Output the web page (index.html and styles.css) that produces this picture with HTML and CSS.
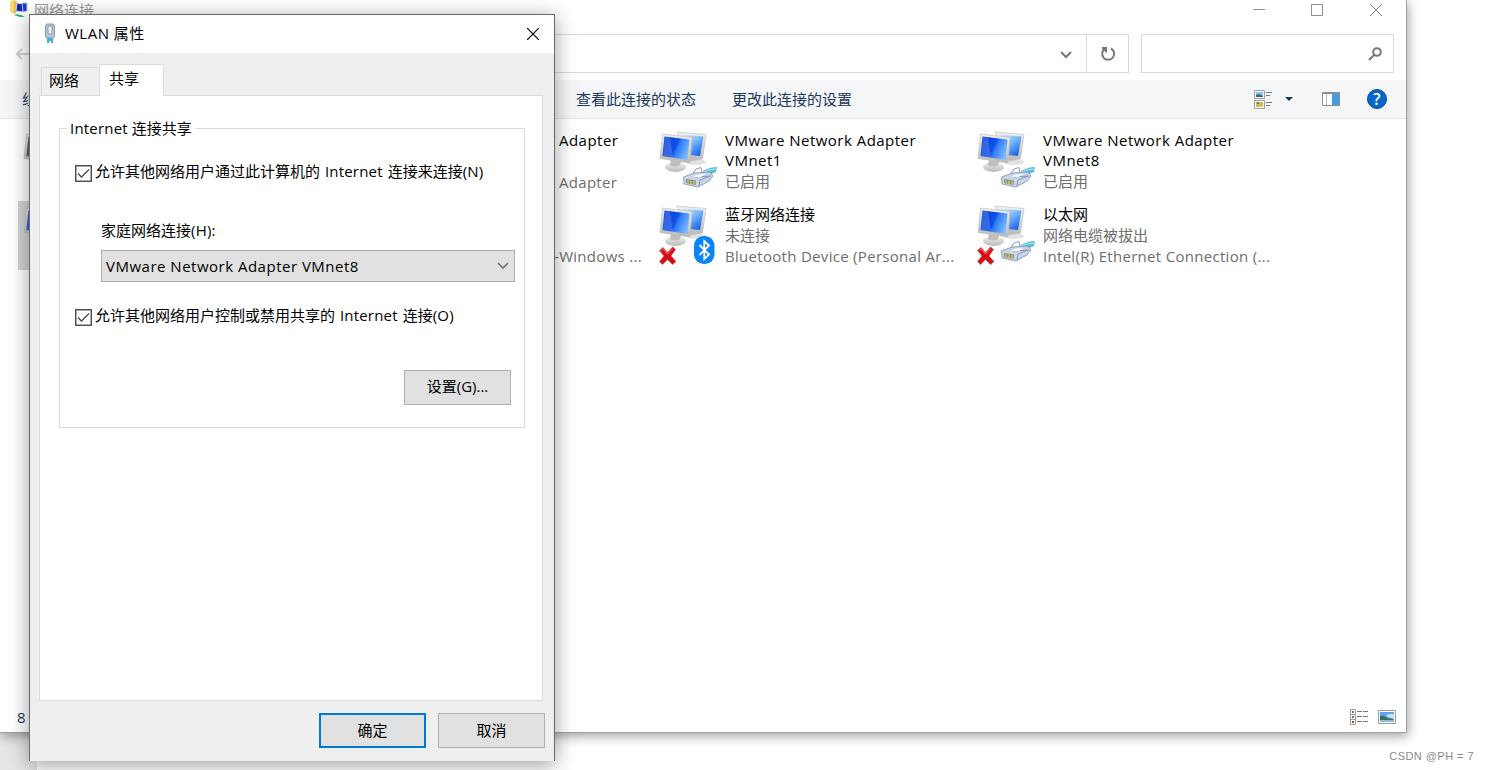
FILE: index.html
```html
<!DOCTYPE html>
<html lang="zh-CN">
<head>
  <meta charset="UTF-8" />
  <title>网络连接</title>
  <link rel="stylesheet" href="styles.css">
</head>
<body>
  <svg width="0" height="0" class="defs">
    <defs>
      <linearGradient id="screen" x1="0" y1="0.2" x2="1" y2="0.6">
        <stop offset="0" stop-color="#0b43d6" />
        <stop offset="0.5" stop-color="#0f50e6" />
        <stop offset="0.6" stop-color="#2f7cf8" />
        <stop offset="1" stop-color="#7dbcff" />
      </linearGradient>
      <linearGradient id="screen2" x1="0" y1="0" x2="0.8" y2="1">
        <stop offset="0" stop-color="#e2f2ff" />
        <stop offset="0.5" stop-color="#79b8fc" />
        <stop offset="1" stop-color="#1660e6" />
      </linearGradient>
      <linearGradient id="metal" x1="0" y1="0" x2="0" y2="1">
        <stop offset="0" stop-color="#f2f2f0" />
        <stop offset="1" stop-color="#b9b9b7" />
      </linearGradient>
    </defs>
    <symbol id="pc" viewBox="0 0 60 60">
      <ellipse cx="37" cy="31" rx="10" ry="3" fill="#e2e2e2" />
      <path d="M18 1L47 3.5L43.5 28L32 30Z" fill="url(#metal)" stroke="#c2c2bf" stroke-width=".7" />
      <path d="M21 3.5L44.5 5.500L41 25L31 24Z" fill="url(#screen2)" />
      <ellipse cx="16.500" cy="36" rx="10.500" ry="5" fill="url(#metal)" />
      <path d="M12 29L22 30L21 34Q16 37 11 34Z" fill="#bdbdbb" />
      <path d="M3.500 3L33 6.500L31 32L1 27.500Z" fill="url(#metal)" stroke="#bdbdba" stroke-width=".7" />
      <path d="M5.500 5.500L30.500 8.500L28.500 29L3.500 25Z" fill="url(#screen)" />
      <path d="M6 6L11 6.500L14 26.500L4 25Z" fill="#fff" opacity=".16" />
    </symbol>
    <symbol id="plug" viewBox="0 0 60 60">
      <path d="M44 40Q51 36 58 36L57 41Q51 43 46 47Z" fill="#5fbcd9" />
      <path d="M45 41Q50 38 57 38" fill="none" stroke="#b5ecf8" />
      <path d="M24.500 46L35 42L51 41L54 45L50 50L39 56L25 53Z" fill="#c9d5e8" stroke="#7f91ae" stroke-width=".8" />
      <path d="M34 43L37 38L42 36.500L43 42M36 46L52 45M40 55L41 49L51 45" fill="none" stroke="#7688a6" stroke-width=".8" />
      <path d="M27 48L37 49.500L36.500 54L27 52Z" fill="#8b916c" />
      <path d="M29 49V52M32 49.500V53M35 50V53.500" stroke="#e3dc79" />
      <path d="M38 43.500L47 42.500L42 46L34 46Z" fill="#f2f7fd" />
    </symbol>
    <symbol id="cross" viewBox="0 0 60 60">
      <path d="M0.500 45.500L4 42.500L8.500 47.500L13.500 42L16.500 44.500L12 51L17 56.500L13.500 59.500L8.500 54.500L3.500 59.500L0.500 56.500L5 51Z" fill="#d90b12" stroke="#c65b5b" stroke-width=".7" />
      <path d="M2.500 45.500L4.500 44L8.500 49L13.500 44" fill="none" stroke="#f46c6c" />
    </symbol>
    <symbol id="bt" viewBox="0 0 60 60">
      <rect x="35" y="31" width="20.500" height="28" rx="9.800" fill="#0a84fb" />
      <path d="M40.500 40L50 49.500L45.300 54V36L50 40.500L40.500 50" fill="none" stroke="#fff" stroke-width="1.800" />
    </symbol>
  </svg>

  <div class="taskbar"></div>

  <div class="explorer">
    <div class="titlebar">
      <svg class="app-icon" width="20" height="20" viewBox="0 0 20 20">
        <path d="M1 1L5 0V14L1 12Z" fill="#f6d879" /><path d="M5 0L8 2V12L5 14Z" fill="#e7bd4a" />
        <path d="M8 3L14 4V12L7 11Z" fill="#1525bd" stroke="#d4d4d4" />
        <path d="M13 3L18 3V11L14 12Z" fill="#173bd0" stroke="#c9c9c9" />
        <path d="M5 15Q10 13 16 17L11 17Z" fill="#24b467" />
      </svg>
      <span class="caption">网络连接</span>
      <div class="win-buttons">
        <svg width="12" height="12" viewBox="0 0 12 12"><path d="M0 5.500H12" /></svg>
        <svg width="12" height="12" viewBox="0 0 12 12"><path d="M.5 .5H11.500V11.500H.5Z" /></svg>
        <svg width="12" height="12" viewBox="0 0 12 12"><path d="M0 0L12 12M12 0L0 12" /></svg>
      </div>
    </div>

    <div class="address-row">
      <svg class="back" width="14" height="12" viewBox="0 0 14 12"><path d="M14 6H1M6 1L1 6L6 11" /></svg>
      <div class="address">
        <svg width="12" height="8" viewBox="0 0 12 8"><path d="M1 1L6 6L11 1" /></svg>
      </div>
      <div class="refresh">
        <svg width="16" height="16" viewBox="0 0 16 16"><path d="M11 2.500A6 6 0 1 1 5 2.700M2 2H6V6.500" /></svg>
      </div>
      <div class="search">
        <svg width="14" height="14" viewBox="0 0 14 14"><circle cx="9" cy="5" r="3.800" /><path d="M6.300 7.700L1 13" /></svg>
      </div>
    </div>

    <div class="commands">
      <span class="cmd organize">组织</span>
      <span class="cmd">查看此连接的状态</span>
      <span class="cmd">更改此连接的设置</span>
      <div class="views">
        <svg width="18" height="19" viewBox="0 0 18 19">
          <path d="M.5 .5H10.500V8.500H.5ZM.5 10.500H10.500V18.500H.5Z" fill="#fff" stroke="#a0a0a0" />
          <path d="M2 2H9V7H2Z" fill="#8cc0f2" /><path d="M2 5L5 4L9 6V7H2Z" fill="#356c78" />
          <path d="M2 12H9V17H2Z" fill="#a9c46a" /><path d="M3 12H5V14H3Z" fill="#d6493b" /><path d="M5 14H8V17H5Z" fill="#f2bb3b" />
          <path d="M12 2.500H18M12 5.500H16M12 12.500H18M12 15.500H16" stroke="#777" />
        </svg>
        <svg class="drop" width="8" height="4" viewBox="0 0 8 4"><path d="M0 0H8L4 4Z" fill="#1e3563" /></svg>
        <svg class="pane" width="18" height="14" viewBox="0 0 18 14">
          <path d="M.5 .5H17.500V13.500H.5Z" fill="#fff" stroke="#8a8d91" /><path d="M0 0H18V2H0Z" fill="#8a8d91" />
          <path d="M4.500 2V13" stroke="#b4b4b4" /><path d="M10 2H17V13H10Z" fill="#429ce5" />
        </svg>
        <span class="help">?</span>
      </div>
    </div>

    <div class="items">
      <div class="item disabled">
        <svg class="icon"><use href="#pc" /></svg>
      </div>
      <div class="item behind">
        <div class="text"><p class="name">Adapter</p><p>&nbsp;</p><p class="en">Adapter</p></div>
      </div>
      <div class="item">
        <svg class="icon"><use href="#pc" /><use href="#plug" /></svg>
        <div class="text"><p class="name">VMware Network Adapter<br>VMnet1</p><p>已启用</p></div>
      </div>
      <div class="item">
        <svg class="icon"><use href="#pc" /><use href="#plug" /></svg>
        <div class="text"><p class="name">VMware Network Adapter<br>VMnet8</p><p>已启用</p></div>
      </div>
      <div class="item selected">
        <svg class="icon"><use href="#pc" /></svg>
      </div>
      <div class="item behind">
        <div class="text"><p class="name">&nbsp;</p><p>&nbsp;</p><p class="en dash">-Windows ...</p></div>
      </div>
      <div class="item">
        <svg class="icon"><use href="#pc" /><use href="#cross" /><use href="#bt" /></svg>
        <div class="text"><p class="name cn">蓝牙网络连接</p><p>未连接</p><p class="en">Bluetooth Device (Personal Ar...</p></div>
      </div>
      <div class="item">
        <svg class="icon"><use href="#pc" /><use href="#cross" /><use href="#plug" /></svg>
        <div class="text"><p class="name cn">以太网</p><p>网络电缆被拔出</p><p class="en">Intel(R) Ethernet Connection (...</p></div>
      </div>
    </div>

    <div class="status">
      <span>8</span>
      <svg width="18" height="16" viewBox="0 0 18 16">
        <path d="M.5 .5H5.500V15.500H.5ZM.5 5.500H5.500M.5 10.500H5.500" fill="#fff" stroke="#a0a0a0" />
        <path d="M2 2H4V4H2Z" fill="#3c88c9" /><path d="M2 7H4V9H2Z" fill="#9b7050" /><path d="M2 12H4V14H2Z" fill="#cf3329" />
        <path d="M7 2.500H12M13 2.500H18M7 7.500H12M13 7.500H18M7 12.500H12M13 12.500H18" stroke="#777" />
      </svg>
      <svg width="18" height="14" viewBox="0 0 18 14">
        <path d="M.5 .5H17.500V13.500H.5Z" fill="#fff" stroke="#9a9a9a" />
        <path d="M2 2H16V12H2Z" fill="#5ea2e8" /><path d="M8 5Q12 3 16 4V9L10 7Z" fill="#c3e2f7" />
        <path d="M2 6Q6 5 9 8L15 9V10H2Z" fill="#376f61" /><path d="M2 10H16V12H2Z" fill="#8bbcd8" />
      </svg>
    </div>
  </div>

  <div class="dialog">
    <div class="dialog-title">
      <svg width="12" height="21" viewBox="0 0 12 21">
        <path d="M3 15H9V20H7V18H5V20H3Z" fill="#39b5dc" />
        <rect x="1.500" y="1" width="9" height="14" rx="2" fill="#b9c7d7" stroke="#8b99a8" />
        <rect x="4" y="3" width="4" height="8" rx="1" fill="#eef4fa" stroke="#8796ab" />
      </svg>
      <span>WLAN 属性</span>
      <svg class="close" width="12" height="12" viewBox="0 0 12 12"><path d="M0 0L12 12M12 0L0 12" /></svg>
    </div>
    <div class="tabs">
      <div class="tab">网络</div>
      <div class="tab active">共享</div>
    </div>
    <div class="page">
      <fieldset class="group">
        <legend><i class="in">Internet</i> 连接共享</legend>
        <label class="check">
          <svg width="17" height="17" viewBox="0 0 17 17"><rect x=".75" y=".75" width="15.500" height="15.500" /><path d="M3 8.500L6.500 12L14 4.500" /></svg>
          <span>允许其他网络用户通过此计算机的 <i class="in">Internet</i> 连接来连接<i class="in">(N)</i></span>
        </label>
        <div class="home-label">家庭网络连接<i class="in">(H):</i></div>
        <div class="select">
          <span>VMware Network Adapter VMnet8</span>
          <svg width="12" height="8" viewBox="0 0 12 8"><path d="M1 1L6 6L11 1" /></svg>
        </div>
        <label class="check">
          <svg width="17" height="17" viewBox="0 0 17 17"><rect x=".75" y=".75" width="15.500" height="15.500" /><path d="M3 8.500L6.500 12L14 4.500" /></svg>
          <span>允许其他网络用户控制或禁用共享的 <i class="in">Internet</i> 连接<i class="in">(O)</i></span>
        </label>
        <button class="btn settings">设置(G)...</button>
      </fieldset>
    </div>
    <div class="actions">
      <button class="btn primary">确定</button>
      <button class="btn">取消</button>
    </div>
  </div>

  <div class="watermark">CSDN @PH = 7</div>
</body>
</html>
```
FILE: styles.css
```css
* { box-sizing: border-box; }
body {
  margin: 0;
  width: 1488px;
  height: 770px;
  position: relative;
  overflow: hidden;
  background: #fff;
  font: 15px/20px "Open Sans", "Noto Sans CJK SC", sans-serif;
  color: #000;
}
p { margin: 0; }
svg { display: block; flex: none; }
i { font-style: normal; }
.defs { position: absolute; }
.taskbar {
  position: absolute;
  left: 0;
  bottom: 0;
  width: 37px;
  height: 40px;
  background: #e6e6e6;
}

/* explorer window */
.explorer {
  position: absolute;
  left: 0;
  top: 0;
  width: 1407px;
  height: 733px;
  display: flex;
  flex-direction: column;
  background: #fff;
  border: solid #a0a0a0;
  border-width: 0 1px 1px 0;
  box-shadow: 1px 3px 11px rgba(0, 0, 0, .38);
}
.titlebar {
  height: 34px;
  display: flex;
  align-items: flex-start;
  padding-left: 9px;
}
.caption {
  margin-left: 5px;
  color: #999;
}
.win-buttons {
  margin: 4px 24px 0 auto;
  display: flex;
  gap: 46px;
  fill: none;
  stroke: #8e8e8e;
}
.win-buttons svg:last-child { margin-left: 1px; }
.address-row {
  height: 39px;
  display: flex;
  align-items: center;
  padding: 0 12px 0 16px;
  fill: none;
  stroke: #777;
  stroke-width: 2;
}
.back { stroke: #d0d0d0; }
.address, .refresh, .search {
  height: 39px;
  border: 1px solid #d9d9d9;
  display: flex;
  align-items: center;
}
.address {
  flex: 1;
  margin-left: 70px;
  justify-content: flex-end;
  padding: 2px 14px 0 0;
}
.refresh {
  width: 43px;
  margin-left: -1px;
  justify-content: center;
}
.search {
  width: 253px;
  margin-left: 12px;
  justify-content: flex-end;
  padding-right: 11px;
}
.commands {
  height: 39px;
  margin-top: 7px;
  display: flex;
  align-items: center;
  background: #f4f6f8;
  border-bottom: 1px solid #e5e6e8;
  color: #1e395b;
}
.cmd { margin-right: 36px; }
.organize {
  width: 540px;
  padding-left: 22px;
}
.views {
  margin-left: auto;
  margin-right: 19px;
  display: flex;
  align-items: center;
}
.drop { margin-left: 13px; }
.pane { margin-left: 29px; }
.help {
  width: 20px;
  height: 20px;
  margin-left: 27px;
  border: 1px solid #0a4a92;
  border-radius: 50%;
  background: #0667cb;
  color: #fff;
  font-size: 16px;
  font-weight: 600;
  line-height: 18px;
  text-align: center;
}
.items {
  flex: 1;
  display: grid;
  grid-template-columns: repeat(4, 318px);
  grid-auto-rows: 74px;
  padding: 8px 0 0 18px;
}
.item {
  height: 69px;
  padding: 4px 0 0 5px;
  display: flex;
  color: #6d6d6d;
  white-space: nowrap;
}
.icon {
  width: 60px;
  height: 60px;
}
.text {
  margin: -1px 0 0 6px;
  line-height: 21px;
}
.name {
  color: #000;
  line-height: 20px;
  letter-spacing: .48px;
}
.name + p { margin-top: 1px; }
.cn { letter-spacing: 0; }
.en { letter-spacing: .3px; }
.behind .text { margin-left: 218px; }
.dash { margin-left: -5px; }
.disabled .icon { filter: grayscale(1); }
.selected { background: #d3d3d3; }
.status {
  height: 32px;
  display: flex;
  align-items: center;
  gap: 10px;
  padding: 2px 10px 0 17px;
  color: #1e395b;
}
.status span { margin-right: auto; }

/* properties dialog */
.dialog {
  position: absolute;
  left: 29px;
  top: 14px;
  width: 526px;
  height: 747px;
  display: flex;
  flex-direction: column;
  background: #efefef;
  border: 1px solid #6a6a6a;
  border-bottom: 0;
  box-shadow: 0 4px 20px rgba(0, 0, 0, .38);
}
.dialog-title {
  height: 38px;
  display: flex;
  align-items: center;
  padding: 0 15px 0 14px;
  background: #fff;
}
.dialog-title svg:first-child { margin-bottom: 2px; }
.dialog-title span {
  margin: 0 0 2px 9px;
  letter-spacing: .5px;
}
.close {
  margin-left: auto;
  stroke: #000;
  stroke-width: 1.2;
}
.tabs {
  height: 42px;
  display: flex;
  align-items: flex-end;
  padding-left: 11px;
}
.tab {
  width: 58px;
  height: 28px;
  padding: 2px 0 0 7px;
  border: 1px solid #dcdcdc;
  border-width: 1px 0 0 1px;
}
.tab.active {
  width: 65px;
  height: 32px;
  padding: 3px 0 0 9px;
  margin-bottom: -1px;
  z-index: 1;
  background: #fff;
  border-width: 1px 1px 0;
}
.page {
  width: 504px;
  height: 606px;
  margin-left: 9px;
  padding: 22px 17px 0 19px;
  background: #fff;
  border: 1px solid #dcdcdc;
}
.group {
  margin: 0;
  height: 310px;
  padding: 0;
  border: 1px solid #dcdcdc;
}
.group legend {
  margin-left: 7px;
  padding: 0 3px;
}
.in { letter-spacing: .2px; }
.check {
  display: flex;
  align-items: center;
  gap: 3px;
  height: 20px;
  margin: 24px 0 0 15px;
  white-space: nowrap;
}
.check svg {
  margin-top: 3px;
  fill: #fff;
  stroke: #4a4a4a;
  stroke-width: 1.4;
}
.check span {
  margin-bottom: 2px;
  word-spacing: 1px;
}
.home-label { margin: 38px 0 0 41px; }
.select {
  width: 414px;
  height: 32px;
  margin: 10px 0 0 41px;
  padding: 0 5px 0 4px;
  display: flex;
  align-items: center;
  justify-content: space-between;
  background: #e1e1e1;
  border: 1px solid #adadad;
  letter-spacing: .5px;
}
.select svg {
  fill: none;
  stroke: #666;
  stroke-width: 1.5;
}
.btn {
  width: 107px;
  height: 35px;
  padding: 0 0 2px;
  background: #e1e1e1;
  border: 1px solid #b0b0b0;
  font: inherit;
  color: #000;
}
.settings {
  display: block;
  margin: 44px 0 0 344px;
  padding-bottom: 4px;
}
.actions {
  display: flex;
  justify-content: flex-end;
  gap: 12px;
  padding: 12px 9px 0 0;
}
.primary { border: 2px solid #0078d7; }

.watermark {
  position: absolute;
  right: 14px;
  bottom: 4px;
  font: 11px/20px "Liberation Sans", sans-serif;
  letter-spacing: .45px;
  color: #8a8a8a;
}
```
